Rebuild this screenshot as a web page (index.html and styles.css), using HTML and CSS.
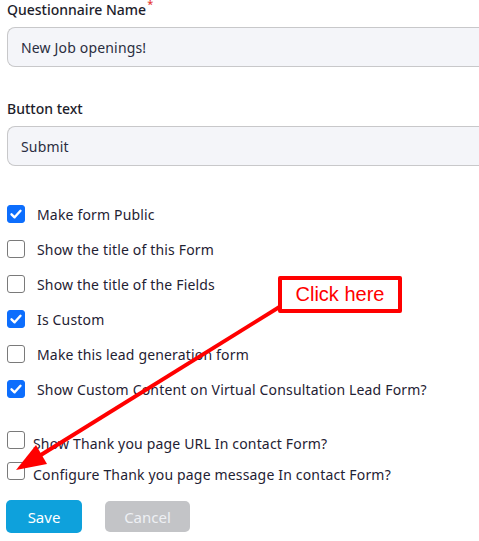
FILE: index.html
```html
<!DOCTYPE html>
<html lang="en">
<head>
<meta charset="utf-8">
<title>Questionnaire</title>
<link rel="stylesheet" href="styles.css">
</head>
<body>
<div class="page">
  <div class="field">
    <label class="label">Questionnaire Name<span class="req">*</span></label>
    <div class="input">New Job openings!</div>
  </div>
  <div class="field field-second">
    <label class="label">Button text</label>
    <div class="input">Submit</div>
  </div>

  <div class="checks">
    <div class="check"><span class="box on"><svg viewBox="0 0 18 18" width="18" height="18"><path d="M4.5 9.3 L7.6 12.3 L13.5 5.8" fill="none" stroke="#fff" stroke-width="2.4" stroke-linecap="round" stroke-linejoin="round"/></svg></span><span class="text">Make form Public</span></div>
    <div class="check"><span class="box"></span><span class="text">Show the title of this Form</span></div>
    <div class="check"><span class="box"></span><span class="text">Show the title of the Fields</span></div>
    <div class="check"><span class="box on"><svg viewBox="0 0 18 18" width="18" height="18"><path d="M4.5 9.3 L7.6 12.3 L13.5 5.8" fill="none" stroke="#fff" stroke-width="2.4" stroke-linecap="round" stroke-linejoin="round"/></svg></span><span class="text">Is Custom</span></div>
    <div class="check"><span class="box"></span><span class="text">Make this lead generation form</span></div>
    <div class="check"><span class="box on"><svg viewBox="0 0 18 18" width="18" height="18"><path d="M4.5 9.3 L7.6 12.3 L13.5 5.8" fill="none" stroke="#fff" stroke-width="2.4" stroke-linecap="round" stroke-linejoin="round"/></svg></span><span class="text">Show Custom Content on Virtual Consultation Lead Form?</span></div>
  </div>

  <div class="checks-tight">
    <div class="check check-sm"><span class="box"></span><span class="text">Show Thank you page URL In contact Form?</span></div>
    <div class="check check-sm"><span class="box"></span><span class="text">Configure Thank you page message In contact Form?</span></div>
  </div>

  <div class="actions">
    <button class="btn btn-save">Save</button>
    <button class="btn btn-cancel">Cancel</button>
  </div>
</div>

<div class="callout">Click here</div>
<svg class="arrow" width="479" height="541" viewBox="0 0 479 541">
  <line x1="281" y1="306" x2="36" y2="458" stroke="#f00" stroke-width="4"/>
  <polygon points="16,470 47,464 36,445" fill="#f00"/>
</svg>
</body>
</html>
```

FILE: styles.css
```css
* { box-sizing: border-box; }
html, body { margin: 0; padding: 0; background: #fff; overflow: hidden; }
body {
  width: 479px;
  height: 541px;
  font-family: "Noto Sans", "Open Sans", sans-serif;
  font-size: 14px;
  letter-spacing: 0.17px;
  color: #1f2233;
  position: relative;
}
.page { padding-left: 7px; }
.field { display: flex; flex-direction: column; }
.label {
  display: block;
  line-height: 20px;
  height: 20px;
  font-weight: 500;
  font-size: 14px;
  letter-spacing: 0;
  color: #1d1d2b;
}
.req { color: #e53935; font-size: 11px; vertical-align: 7px; margin-left: 1px; line-height: 0; }
.input {
  margin-top: 7px;
  height: 40px;
  width: 472px;
  border: 1px solid #c8c8ca;
  border-right: none;
  border-radius: 8px 0 0 8px;
  background: #f4f5f9;
  padding-left: 13px;
  display: flex;
  align-items: center;
  font-size: 14px;
  color: #2a2d40;
}
.field-second { margin-top: 32px; }
.checks { margin-top: 39px; display: flex; flex-direction: column; gap: 17px; }
.check { display: flex; align-items: center; height: 18px; }
.box {
  width: 18px; height: 18px;
  border: 1px solid #7a7a7a;
  border-radius: 3px;
  background: #fff;
  flex: none;
  display: flex;
}
.box.on { background: #0d6efd; border-color: #0d6efd; }
.box.on svg { margin: -1px; }
.text { margin-left: 12px; white-space: nowrap; }
.checks-tight { margin-top: 33px; display: flex; flex-direction: column; gap: 13px; }
.check-sm .text { margin-left: 8px; position: relative; top: 3px; }
.actions { margin-top: 20px; display: flex; align-items: flex-start; gap: 23px; margin-left: -1px; }
.btn {
  font-family: "Noto Sans", sans-serif;
  font-size: 15px;
  border: none;
  border-radius: 5px;
  color: #fff;
  padding: 0;
}
.btn-save { width: 76px; height: 33px; background: #0ea1dc; }
.btn-cancel { width: 85px; height: 31px; margin-top: 1px; background: #c3c4c7; color: #eef0f4; }
.callout {
  position: absolute;
  left: 278px; top: 276px;
  width: 124px; height: 37px;
  border: 4px solid #f00;
  border-radius: 2px;
  background: #fff;
  color: #f00;
  font-family: "Liberation Sans", Arial, sans-serif;
  font-size: 20px;
  letter-spacing: 0;
  line-height: 29px;
  text-align: center;
}
.arrow { position: absolute; left: 0; top: 0; pointer-events: none; }
```
